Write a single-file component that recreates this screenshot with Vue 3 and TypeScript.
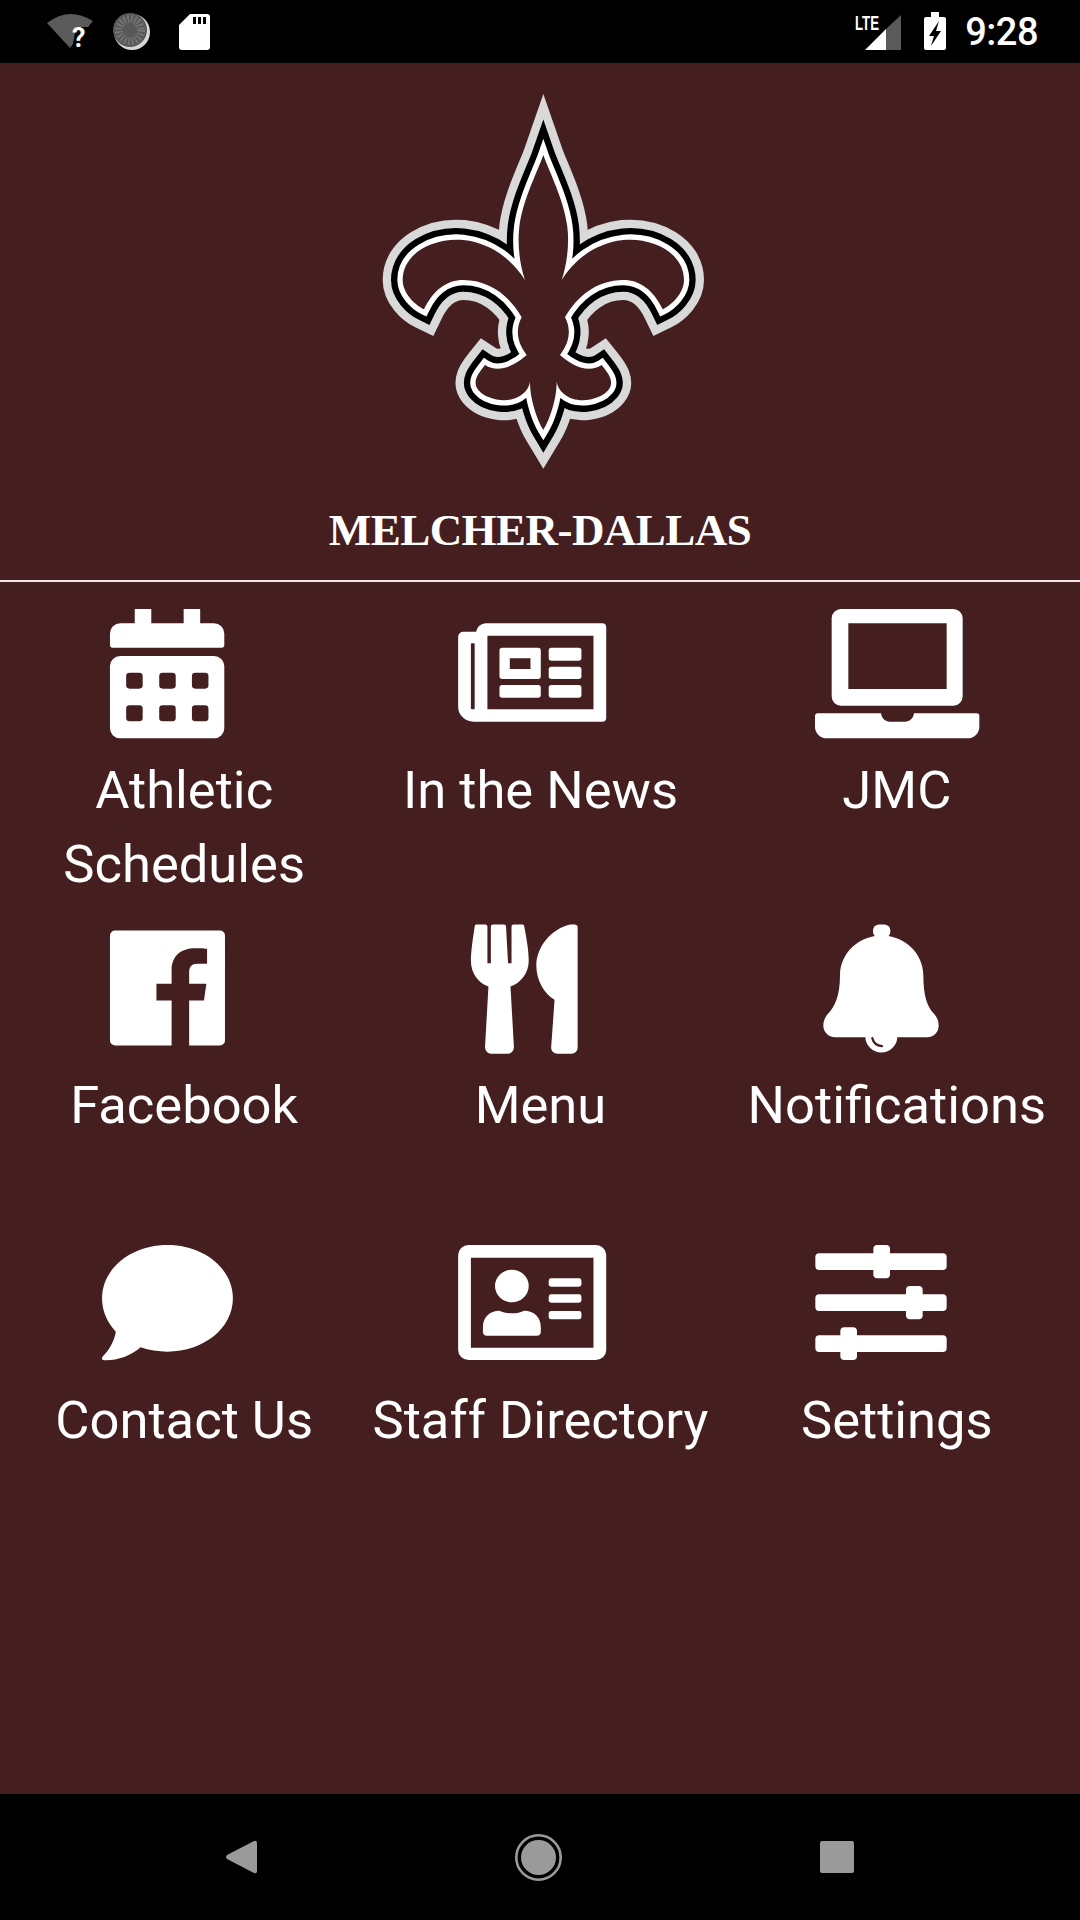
<template>
  <div class="screen">
    <div class="status-bar">
      <svg class="status-left" width="240" height="63" viewBox="0 0 240 63">
        <path d="M70 48 L47 23 Q69 6 93 21 L88 27 H76 L73 44 Z" fill="#5a5a5a" />
        <text x="72" y="47" class="question">?</text>
        <circle cx="132" cy="32" r="18" fill="#d8d8d8" />
        <circle cx="130" cy="30" r="17" fill="#585858" />
        <circle cx="130" cy="30" r="11" fill="none" stroke="#777" stroke-width="8" stroke-dasharray="1.5 2" />
        <path d="M190 14 H207 Q210 14 210 17 V47 Q210 50 207 50 H182 Q179 50 179 47 V25 Z" fill="#fff" />
        <path d="M193 17 H196 V24 H193 Z M198 17 H201 V24 H198 Z M203 17 H206 V24 H203 Z" fill="#000" />
      </svg>
      <div class="status-right">
        <svg width="100" height="63" viewBox="850 0 100 63">
          <path d="M885 29 L900 15 V50 H885 Z" fill="#5a5a5a" />
          <path d="M864 50 L885 29 V50 Z" fill="#fff" />
          <text x="854" y="30" class="lte" textLength="24" lengthAdjust="spacingAndGlyphs">LTE</text>
          <path d="M930 12 H938 V17 H943 Q945 17 945 19 V48 Q945 50 943 50 H925 Q923 50 923 48 V19 Q923 17 925 17 H930 Z" fill="#fff" />
          <path d="M938 21 L928 36 H933 L930 46 L940 31 H935 Z" fill="#000" />
        </svg>
        <span class="clock">9:28</span>
      </div>
    </div>

    <main class="content">
      <header class="brand">
        <svg class="logo" width="360" height="400" viewBox="0 0 1080 1200">
          <path
            v-for="layer in logoLayers"
            :key="layer.color"
            :d="logoPath"
            fill="none"
            :stroke="layer.color"
            :stroke-width="layer.width"
            stroke-miterlimit="5"
          />
          <path :d="logoPath" fill="#451f1f" />
        </svg>
        <h1 class="school">MELCHER-DALLAS</h1>
      </header>

      <div class="grid">
        <div v-for="item in items" :key="item.label" class="tile">
          <svg class="tile-icon" width="200" height="136" :viewBox="item.box" preserveAspectRatio="none">
            <path v-for="(d, i) in item.parts" :key="i" :d="d" fill="#fff" fill-rule="evenodd" />
            <path v-if="item.cut" :d="item.cut" fill="none" stroke="#451f1f" stroke-width="7" stroke-linecap="round" />
          </svg>
          <span class="tile-label">{{ item.label }}</span>
        </div>
      </div>
    </main>

    <nav class="nav-bar">
      <svg width="31" height="34" viewBox="0 0 31 34">
        <path d="M28 1 Q31 0 31 3 V31 Q31 34 28 33 L1 19 Q-1 17 1 15 Z" fill="#9a9a9a" />
      </svg>
      <svg width="47" height="47" viewBox="0 0 47 47">
        <circle cx="23.5" cy="23.5" r="22.2" fill="none" stroke="#9a9a9a" stroke-width="2.6" />
        <circle cx="23.5" cy="23.5" r="17.5" fill="#9a9a9a" />
      </svg>
      <svg width="34" height="32" viewBox="0 0 34 32">
        <rect width="34" height="32" rx="2" fill="#9a9a9a" />
      </svg>
    </nav>
  </div>
</template>

<script setup lang="ts">
interface Tile {
  label: string;
  box: string;
  parts: string[];
  cut?: string;
}

// rounded rect as a path, so holes can use evenodd
function rr(x: number, y: number, w: number, h: number, r: number): string {
  return `M${x + r} ${y}H${x + w - r}A${r} ${r} 0 0 1 ${x + w} ${y + r}V${y + h - r}A${r} ${r} 0 0 1 ${x + w - r} ${y + h}H${x + r}A${r} ${r} 0 0 1 ${x} ${y + h - r}V${y + r}A${r} ${r} 0 0 1 ${x + r} ${y}Z`;
}

const logoLayers = [
  { color: '#d9d9d9', width: 120 },
  { color: '#000000', width: 70 },
  { color: '#ffffff', width: 32 },
];

const logoPath =
  'M550 225 C566 271 612 360 622 440 C628 490 622 550 605 600 ' +
  'C640 545 700 490 790 480 C880 472 972 520 972 600 C972 640 935 675 908 688 ' +
  'C880 630 840 600 790 600 C710 600 650 650 615 712 C630 740 635 780 600 825 ' +
  'C625 848 680 885 725 855 C745 880 765 905 745 930 C720 960 650 975 612 942 ' +
  'C600 932 592 920 590 905 C590 960 568 1020 550 1050 ' +
  'C532 1020 510 960 510 905 C508 920 500 932 488 942 ' +
  'C450 975 380 960 355 930 C335 905 355 880 375 855 ' +
  'C420 885 475 848 500 825 C465 780 470 740 485 712 ' +
  'C450 650 390 600 310 600 C260 600 220 630 192 688 ' +
  'C165 675 128 640 128 600 C128 520 220 472 310 480 ' +
  'C400 490 460 545 495 600 C478 550 472 490 478 440 C488 360 534 271 550 225 Z';

const items: Tile[] = [
  {
    label: 'Athletic Schedules',
    box: '-17.4 42 580.8 408',
    parts: [
      'M130 57H178V100H272V57H320V100H360A30 30 0 0 1 390 130V165A8 8 0 0 1 382 173H66A8 8 0 0 1 58 165V130A30 30 0 0 1 88 100H130Z',
      rr(58, 198, 332, 247, 30) +
        [105, 201, 296].map((x) => rr(x, 248, 48, 48, 10) + rr(x, 346, 48, 48, 10)).join(''),
    ],
  },
  {
    label: 'In the News',
    box: '1017.3 42 580.8 408',
    parts: [
      'M1150 100H1488A12 12 0 0 1 1500 112V383A12 12 0 0 1 1488 395H1115A45 45 0 0 1 1070 350V140A15 15 0 0 1 1085 125H1122A30 30 0 0 1 1150 100Z' +
        'M1155 137V358H1463V137Z' +
        rr(1107, 160, 11, 198, 3),
      rr(1190, 173, 120, 94, 8) + 'M1220 205H1280V237H1220Z',
      rr(1333, 173, 95, 39, 8),
      rr(1333, 230, 95, 37, 8),
      rr(1333, 285, 95, 38, 8),
      rr(1190, 285, 120, 38, 8),
    ],
  },
  {
    label: 'JMC',
    box: '51 42 600 408',
    parts: [
      rr(155, 57, 393, 290, 28) + 'M205 100H500V297H205Z',
      'M115 370H303C305 385 315 395 330 395H375C390 395 400 385 402 370H590A8 8 0 0 1 598 378V410A35 35 0 0 1 563 445H140A35 35 0 0 1 105 410V378A8 8 0 0 1 115 370Z',
    ],
  },
  {
    label: 'Facebook',
    box: '-17.4 25.5 580.8 408',
    parts: [
      rr(58, 60, 334, 345, 15) +
        'M237 405V270H193V220H237V180C237 135 265 113 305 113C320 113 335 114 340 115V160H312C295 160 288 170 288 185V220H338L331 270H288V405Z',
    ],
  },
  {
    label: 'Menu',
    box: '1017.3 25.5 580.8 408',
    parts: [
      'M1125 42H1150A6 6 0 0 1 1155 48V158H1165V48A6 6 0 0 1 1171 42H1203A6 6 0 0 1 1209 48L1215 158H1225V48A6 6 0 0 1 1231 42H1255A6 6 0 0 1 1262 48C1270 90 1275 125 1275 150C1275 190 1250 218 1222 228L1232 410A20 20 0 0 1 1212 430H1168A20 20 0 0 1 1148 410L1158 228C1130 218 1107 190 1107 150C1107 125 1112 90 1118 48A6 6 0 0 1 1125 42Z',
      'M1395 42H1408A9 9 0 0 1 1417 51V412A18 18 0 0 1 1399 430H1358A18 18 0 0 1 1340 412L1350 268C1320 250 1297 210 1297 165C1297 110 1340 55 1395 42Z',
    ],
  },
  {
    label: 'Notifications',
    box: '21 25.5 600 408',
    parts: [
      rr(249, 42, 52, 40, 18),
      'M275 75C340 75 400 125 400 195C400 255 412 290 432 310C442 322 446 332 446 345C446 365 432 380 412 380H135C115 380 100 365 100 345C100 332 104 322 114 310C134 290 150 255 150 195C150 125 210 75 275 75Z',
      'M226 378A48 48 0 0 0 322 378Z',
    ],
    cut: 'M247 383C250 396 261 405 276 407',
  },
  {
    label: 'Contact Us',
    box: '-17.4 12 580.8 408',
    parts: [
      'M225 45C330 45 415 115 415 205C415 295 330 365 225 365C198 365 172 361 147 352C118 378 80 392 42 391C34 391 32 384 38 378C55 360 70 335 75 305C50 278 35 243 35 205C35 115 120 45 225 45Z',
    ],
  },
  {
    label: 'Staff Directory',
    box: '1017.3 12 580.8 408',
    parts: [
      rr(1070, 45, 430, 345, 30) + 'M1107 83V353H1463V83Z',
      'M1226 119A49 49 0 1 1 1226 217A49 49 0 1 1 1226 119Z',
      'M1190 242C1200 247 1212 250 1226 250C1240 250 1252 247 1262 242C1290 242 1310 262 1310 290V305A12 12 0 0 1 1298 317H1154A12 12 0 0 1 1142 305V290C1142 262 1162 242 1190 242Z',
      rr(1333, 145, 95, 25, 7),
      rr(1333, 193, 95, 25, 7),
      rr(1333, 243, 95, 25, 7),
    ],
  },
  {
    label: 'Settings',
    box: '21 12 600 408',
    parts: [
      rr(76, 70, 394, 50, 12),
      rr(76, 193, 394, 50, 12),
      rr(76, 316, 394, 50, 12),
      rr(250, 45, 50, 100, 12),
      rr(348, 168, 50, 100, 12),
      rr(151, 292, 50, 98, 12),
    ],
  },
];
</script>

<style>
html,
body {
  margin: 0;
  background: #451f1f;
}
</style>

<style scoped>
.screen {
  width: 1080px;
  height: 1920px;
  display: flex;
  flex-direction: column;
  background: #451f1f;
  font-family: Roboto, "Liberation Sans", sans-serif;
  color: #fff;
  overflow: hidden;
}

/* status bar */
.status-bar {
  height: 63px;
  flex: none;
  background: #000;
  display: flex;
  justify-content: space-between;
}

.status-left {
  display: block;
}

.status-right {
  display: flex;
  align-items: center;
  padding-right: 42px;
}

.status-right svg {
  display: block;
}

.question {
  font-family: Roboto, sans-serif;
  font-weight: 700;
  font-size: 27px;
  fill: #fff;
}

.lte {
  font-family: "Liberation Sans", sans-serif;
  font-weight: 700;
  font-size: 21px;
  fill: #fff;
}

.clock {
  font-size: 38px;
  font-weight: 500;
  margin-left: 14px;
  letter-spacing: -0.5px;
}

/* main */
.content {
  flex: 1;
  min-height: 0;
}

.brand {
  display: flex;
  flex-direction: column;
  align-items: center;
  padding-top: 17px;
  height: 500px;
  padding-bottom: 0;
  border-bottom: 2px solid #f0e8e8;
  box-sizing: content-box;
}

.logo {
  display: block;
}

.school {
  margin: 23px 0 0;
  font-family: "Liberation Serif", serif;
  font-size: 45px;
  line-height: 54px;
  font-weight: 700;
  letter-spacing: -0.55px;
}

.grid {
  display: grid;
  grid-template-columns: repeat(3, 1fr);
  grid-auto-rows: 315px;
  padding: 22px 5px 0 6px;
}

.tile {
  display: flex;
  flex-direction: column;
  align-items: center;
}

.tile-icon {
  display: block;
  flex: none;
}

.tile-label {
  margin-top: 14px;
  width: 350px;
  text-align: center;
  font-size: 52.5px;
  line-height: 73.5px;
}

/* nav */
.nav-bar {
  height: 126px;
  flex: none;
  background: #000;
  display: flex;
  align-items: center;
  justify-content: center;
  gap: 258px;
}

.nav-bar svg {
  display: block;
}
</style>
